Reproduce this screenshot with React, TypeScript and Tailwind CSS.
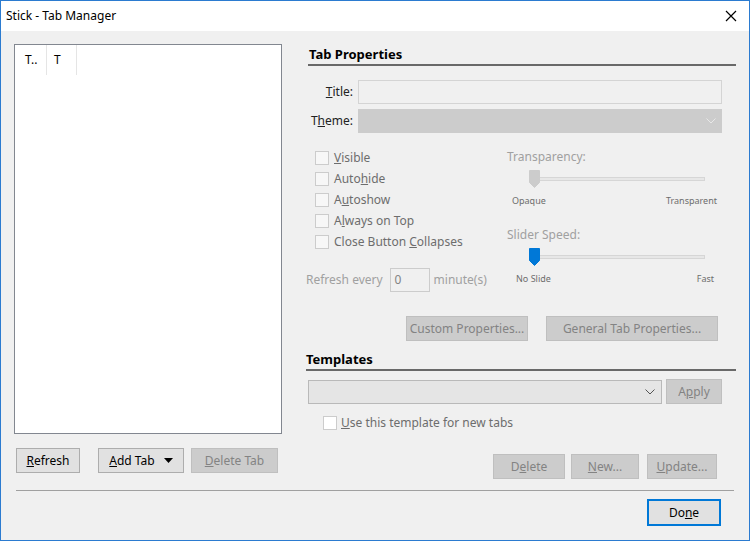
import React from "react"

const font = { fontFamily: '"Noto Sans", "Liberation Sans", sans-serif' }

function Btn({
    children,
    disabled,
    className = "",
}: {
    children: React.ReactNode
    disabled?: boolean
    className?: string
}) {
    return (
        <div
            className={
                "flex h-[25px] shrink-0 items-center justify-center border text-[12px] " +
                (disabled
                    ? "border-[#bfbfbf] bg-[#cccccc] text-[#838383] "
                    : "border-[#adadad] bg-[#e1e1e1] text-[#000] ") +
                className
            }
        >
            {children}
        </div>
    )
}

function Check({ children }: { children: React.ReactNode }) {
    return (
        <div className="flex h-[21px] items-center gap-[5px]">
            <div className="h-[14px] w-[14px] border border-[#cccccc] bg-[#f7f7f7]" />
            <span className="text-[12px] text-[#6d6d6d]">{children}</span>
        </div>
    )
}

function Chevron({ color }: { color: string }) {
    return (
        <svg width="10" height="6" viewBox="0 0 10 6">
            <path d="M0.5 0.5 L5 5 L9.5 0.5" fill="none" stroke={color} strokeWidth="1" />
        </svg>
    )
}

function Thumb({ color }: { color: string }) {
    return (
        <svg width="11" height="18" viewBox="0 0 11 18">
            <path d="M0.5 0.5 H10.5 V12.5 L5.5 17.5 L0.5 12.5 Z" fill={color} stroke={color} />
        </svg>
    )
}

function Slider({
    label,
    left,
    right,
    thumb,
    labelsClass,
}: {
    label: string
    left: string
    right: string
    thumb: string
    labelsClass: string
}) {
    return (
        <div className="flex flex-col">
            <div className="h-[16px] text-[12px] leading-[16px] text-[#a0a0a0]">{label}</div>
            <div className="ml-[22px] mt-[5px] flex h-[18px] w-[176px] items-center">
                <div className="relative flex h-[4px] w-full items-center border border-[#d6d6d6] bg-[#e7e7e7]">
                    <div className="absolute left-[-1px] top-[-8px]">
                        <Thumb color={thumb} />
                    </div>
                </div>
            </div>
            <div className={"mt-[6px] flex justify-between text-[9px] text-[#6d6d6d] " + labelsClass}>
                <span>{left}</span>
                <span>{right}</span>
            </div>
        </div>
    )
}

export default function App() {
    return (
        <div
            style={font}
            className="flex h-[541px] w-[750px] flex-col border border-[#2b7bd0] bg-[#f0f0f0] text-black"
        >
            <div className="flex h-[30px] shrink-0 items-center justify-between bg-white pl-[5px] pr-[12px]">
                <span className="text-[12px]">Stick - Tab Manager</span>
                <svg width="12" height="12" viewBox="0 0 12 12">
                    <path d="M1 1 L11 11 M11 1 L1 11" stroke="#000" strokeWidth="1.2" />
                </svg>
            </div>

            <div className="flex flex-1 flex-col px-[13px]">
                <div className="flex h-[449px] shrink-0">
                    {/* left column */}
                    <div className="flex w-[268px] flex-col pt-[13px]">
                        <div className="h-[390px] shrink-0 border border-[#828790] bg-white">
                            <div className="flex h-[30px] text-[12px]">
                                <div className="flex w-[32px] items-center border-r border-[#e5e5e5] pl-[10px]">T..</div>
                                <div className="flex w-[30px] items-center border-r border-[#e5e5e5] pl-[7px]">T</div>
                            </div>
                        </div>
                        <div className="mt-[14px] flex items-center pl-[2px]">
                            <Btn className="w-[64px]">
                                <span><u>R</u>efresh</span>
                            </Btn>
                            <Btn className="ml-[18px] w-[86px] gap-[9px]">
                                <span><u>A</u>dd Tab</span>
                                <svg width="9" height="5" viewBox="0 0 9 5">
                                    <path d="M0 0 H9 L4.5 5 Z" fill="#000" />
                                </svg>
                            </Btn>
                            <Btn disabled className="ml-[7px] w-[87px]">
                                <span><u>D</u>elete Tab</span>
                            </Btn>
                        </div>
                    </div>

                    {/* right column */}
                    <div className="ml-[24px] flex flex-1 flex-col pt-[15px]">
                        <div className="pl-[3px] text-[13px] font-bold leading-[17px]">Tab Properties</div>
                        <div className="ml-[2px] mt-[1px] h-[2px] shrink-0 bg-[#696969]" />

                        <div className="mt-[14px] flex items-center">
                            <span className="w-[47px] text-right text-[12px] text-[#222]">
                                <u>T</u>itle:
                            </span>
                            <div className="ml-[5px] h-[24px] w-[364px] border border-[#d4d4d4] bg-[#f0f0f0]" />
                        </div>
                        <div className="mt-[5px] flex items-center">
                            <span className="w-[47px] text-right text-[12px] text-[#222]">
                                T<u>h</u>eme:
                            </span>
                            <div className="ml-[5px] flex h-[24px] w-[364px] items-center justify-end bg-[#cccccc] pr-[6px]">
                                <Chevron color="#e8e8e8" />
                            </div>
                        </div>

                        <div className="mt-[14px] flex shrink-0">
                            <div className="flex w-[201px] flex-col pl-[9px]">
                                <Check><u>V</u>isible</Check>
                                <Check>Auto<u>h</u>ide</Check>
                                <Check>A<u>u</u>toshow</Check>
                                <Check>A<u>l</u>ways on Top</Check>
                                <Check>Close Button <u>C</u>ollapses</Check>
                            </div>
                            <div className="flex flex-col pt-[2px]">
                                <Slider
                                    label="Transparency:"
                                    left="Opaque"
                                    right="Transparent"
                                    thumb="#cccccc"
                                    labelsClass="w-[210px] pl-[5px]"
                                />
                                <div className="mt-[19px]">
                                    <Slider
                                        label="Slider Speed:"
                                        left="No Slide"
                                        right="Fast"
                                        thumb="#0078d7"
                                        labelsClass="w-[207px] pl-[9px]"
                                    />
                                </div>
                            </div>
                        </div>

                        <div className="mt-[-17px] flex items-center text-[12px] text-[#a0a0a0]">
                            <span>Refresh every</span>
                            <div className="ml-[7px] flex h-[24px] w-[40px] items-center border border-[#cccccc] pl-[4px] text-[#838383]">
                                0
                            </div>
                            <span className="ml-[4px]">minute(s)</span>
                        </div>

                        <div className="mt-[24px] flex pl-[100px]">
                            <Btn disabled className="w-[122px]">Custom Properties...</Btn>
                            <Btn disabled className="ml-[18px] w-[172px]">General Tab Properties...</Btn>
                        </div>

                        <div className="mt-[10px] text-[13px] font-bold leading-[17px]">Templates</div>
                        <div className="mt-[1px] h-[2px] shrink-0 bg-[#696969]" />

                        <div className="mt-[8px] flex items-center pl-[2px]">
                            <div className="flex h-[24px] w-[354px] items-center justify-end border border-[#b9b9b9] bg-[#e5e5e5] pr-[6px]">
                                <Chevron color="#555" />
                            </div>
                            <Btn disabled className="ml-[4px] h-[22px] w-[56px]">
                                <span>A<u>p</u>ply</span>
                            </Btn>
                        </div>

                        <div className="mt-[10px] flex items-center pl-[17px]">
                            <div className="h-[14px] w-[14px] border border-[#cccccc] bg-white" />
                            <span className="ml-[4px] text-[12px] text-[#6d6d6d]">
                                <u>U</u>se this template for new tabs
                            </span>
                        </div>

                        <div className="mt-[22px] flex justify-end pr-[19px]">
                            <Btn disabled className="w-[72px]">
                                <span>D<u>e</u>lete</span>
                            </Btn>
                            <Btn disabled className="ml-[6px] w-[68px]">
                                <span><u>N</u>ew...</span>
                            </Btn>
                            <Btn disabled className="ml-[8px] w-[70px]">
                                <span><u>U</u>pdate...</span>
                            </Btn>
                        </div>
                    </div>
                </div>

                <div className="mx-[2px] mt-[10px] h-[1px] shrink-0 bg-[#a0a0a0]" />

                <div className="mt-[8px] flex justify-end pr-[15px]">
                    <div className="flex h-[27px] w-[74px] items-center justify-center border-2 border-[#0078d7] bg-[#e1e1e1] text-[12px]">
                        <span>Do<u>n</u>e</span>
                    </div>
                </div>
            </div>
        </div>
    )
}
